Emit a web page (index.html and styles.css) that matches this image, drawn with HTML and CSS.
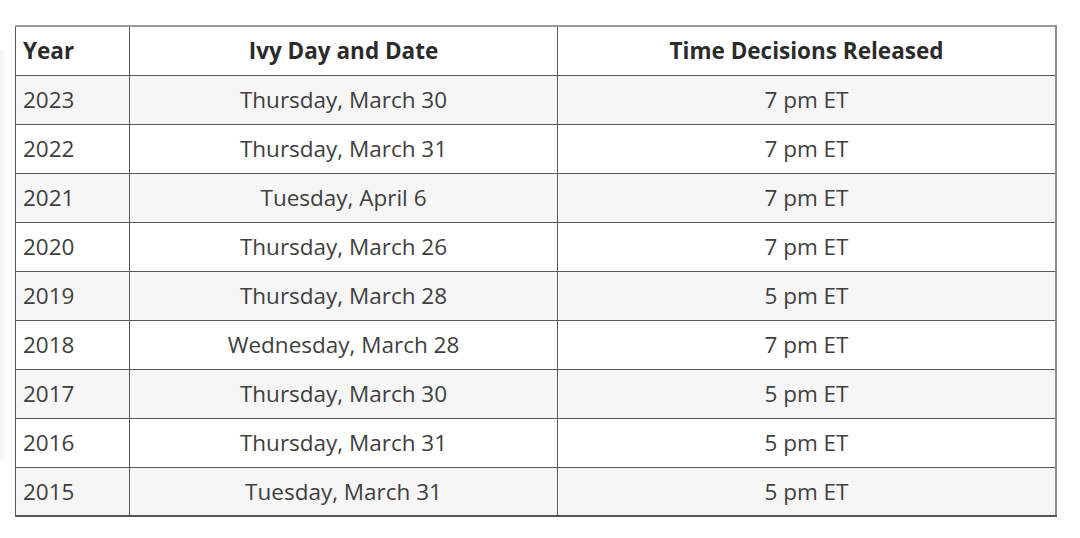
FILE: index.html
```html
<!DOCTYPE html>
<html>
<head>
<meta charset="utf-8">
<link rel="stylesheet" href="styles.css">
</head>
<body>
<div class="edge-shadow"></div>
<table class="ivy">
  <thead>
    <tr><th class="c-year">Year</th><th class="c-date">Ivy Day and Date</th><th class="c-time">Time Decisions Released</th></tr>
  </thead>
  <tbody>
    <tr><td>2023</td><td class="ctr">Thursday, March 30</td><td class="ctr">7 pm ET</td></tr>
    <tr><td>2022</td><td class="ctr">Thursday, March 31</td><td class="ctr">7 pm ET</td></tr>
    <tr><td>2021</td><td class="ctr">Tuesday, April 6</td><td class="ctr">7 pm ET</td></tr>
    <tr><td>2020</td><td class="ctr">Thursday, March 26</td><td class="ctr">7 pm ET</td></tr>
    <tr><td>2019</td><td class="ctr">Thursday, March 28</td><td class="ctr">5 pm ET</td></tr>
    <tr><td>2018</td><td class="ctr">Wednesday, March 28</td><td class="ctr">7 pm ET</td></tr>
    <tr><td>2017</td><td class="ctr">Thursday, March 30</td><td class="ctr">5 pm ET</td></tr>
    <tr><td>2016</td><td class="ctr">Thursday, March 31</td><td class="ctr">5 pm ET</td></tr>
    <tr><td>2015</td><td class="ctr">Tuesday, March 31</td><td class="ctr">5 pm ET</td></tr>
  </tbody>
</table>
</body>
</html>
```
FILE: styles.css
```css
html, body {
  margin: 0;
  background: #ffffff;
}
body {
  padding: 25px 0 0 15px;
  font-family: "Open Sans", "Liberation Sans", sans-serif;
  color: #3f3f3f;
  position: relative;
  min-height: 538px;
  box-sizing: border-box;
}
.edge-shadow {
  position: absolute;
  left: 0;
  top: 50px;
  width: 7px;
  height: 410px;
  background: linear-gradient(to right, rgba(0,0,0,0.05), rgba(0,0,0,0));
}
.ivy {
  width: 1042px;
  border-collapse: collapse;
  table-layout: fixed;
  font-size: 22.5px;
  border-top: 2px solid #9a9a9a;
  border-right: 2px solid #8c8c8c;
  border-left: 1px solid #444;
  border-bottom: 2px solid #555;
}
.ivy th, .ivy td {
  border: 1px solid #5a5a5a;
  height: 49px;
  padding: 0 7px;
  box-sizing: border-box;
  line-height: 1.2;
}
.ivy th {
  font-weight: 700;
  color: #2b2b2b;
  text-align: center;
  background: #fff;
}
.ivy th.c-year { text-align: left; width: 114px; }
.ivy th.c-date { width: 428px; }
.ivy td { text-align: left; }
.ivy td.ctr { text-align: center; }
.ivy tbody tr:nth-child(odd) td { background: #f6f6f6; }
.ivy tbody tr:nth-child(even) td { background: #ffffff; }
```
